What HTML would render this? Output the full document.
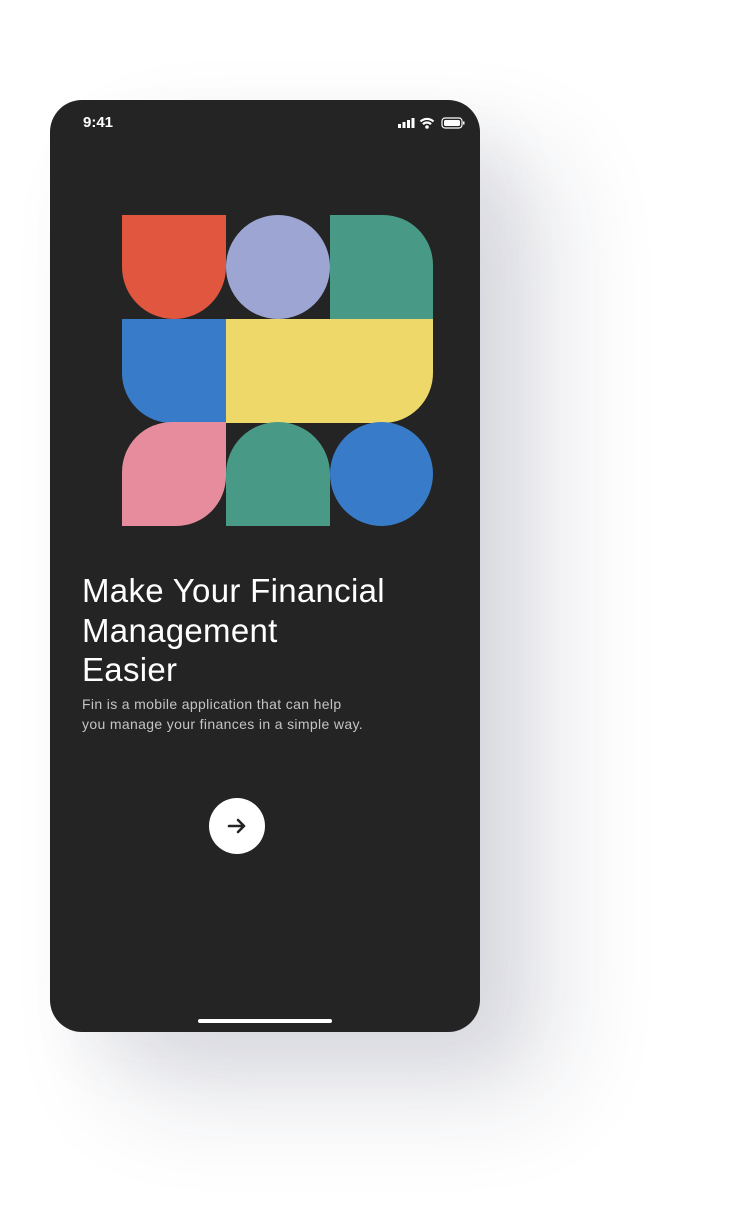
<!DOCTYPE html>
<html><head><style>
html,body{margin:0;padding:0;background:#fff;width:730px;height:1232px;overflow:hidden;font-family:"Liberation Sans",sans-serif}
.phone{position:absolute;left:50px;top:100px;width:430px;height:932px;background:#242424;border-radius:32px;box-shadow:70px 60px 110px rgba(30,35,70,0.14),30px 30px 60px rgba(30,35,70,0.05);overflow:hidden}
.s{position:absolute;width:104px;height:104px}
</style></head><body>
<div class="phone">
 <div style="position:absolute;left:33px;top:14px;color:#fff;font-size:15px;font-weight:bold">9:41</div>
 <svg style="position:absolute;left:348px;top:17px" width="68" height="12" viewBox="0 0 68 12">
  <rect x="0" y="7" width="3" height="4" fill="#fff"/><rect x="4.5" y="5" width="3" height="6" fill="#fff"/><rect x="9" y="3" width="3" height="8" fill="#fff"/><rect x="13.5" y="1" width="3" height="10" fill="#fff"/>
  <path d="M22.5 4.5a9.5 9.5 0 0 1 13 0M25 7.2a5.5 5.5 0 0 1 8 0" stroke="#fff" stroke-width="2.2" fill="none"/><circle cx="29" cy="10" r="1.8" fill="#fff"/>
  <rect x="44" y="1" width="20" height="10" rx="3" stroke="#fff" stroke-width="1.2" fill="none"/><rect x="46" y="3" width="16" height="6" rx="1.5" fill="#fff"/><rect x="65" y="4.5" width="1.5" height="3" fill="#fff"/>
 </svg>
 <div class="s" style="left:72px;top:115px;background:#e1563e;border-radius:0 0 52px 52px"></div>
 <div class="s" style="left:176px;top:115px;background:#9da6d2;border-radius:50%"></div>
 <div class="s" style="left:280px;top:115px;background:#489a86;border-radius:0 50px 0 0;width:103px"></div>
 <div class="s" style="left:72px;top:219px;background:#387cc9;border-radius:0 0 0 50px"></div>
 <div class="s" style="left:176px;top:219px;width:207px;background:#eed86a;border-radius:0 0 50px 0"></div>
 <div class="s" style="left:72px;top:322px;background:#e68c9c;border-radius:50px 0 50px 0"></div>
 <div class="s" style="left:176px;top:322px;background:#489a86;border-radius:52px 52px 0 0"></div>
 <div class="s" style="left:280px;top:322px;width:103px;background:#387cc9;border-radius:50%"></div>
 <div style="position:absolute;left:32px;top:471px;color:#fff;font-size:33px;line-height:39.5px;letter-spacing:0.3px">Make Your Financial<br>Management<br>Easier</div>
 <div style="position:absolute;left:32px;top:594px;color:#c4c4c4;font-size:14px;line-height:20px;letter-spacing:0.35px">Fin is a mobile application that can help<br>you manage your finances in a simple way.</div>
 <div style="position:absolute;left:159px;top:698px;width:56px;height:56px;border-radius:50%;background:#fff"></div>
 <svg style="position:absolute;left:176px;top:715px" width="22" height="22" viewBox="0 0 22 22"><path d="M3 11h15M12 5l6 6-6 6" stroke="#242424" stroke-width="2.6" fill="none" stroke-linecap="round" stroke-linejoin="round"/></svg>
 <div style="position:absolute;left:148px;top:919px;width:134px;height:4px;border-radius:2px;background:#fff"></div>
</div>
</body></html>
